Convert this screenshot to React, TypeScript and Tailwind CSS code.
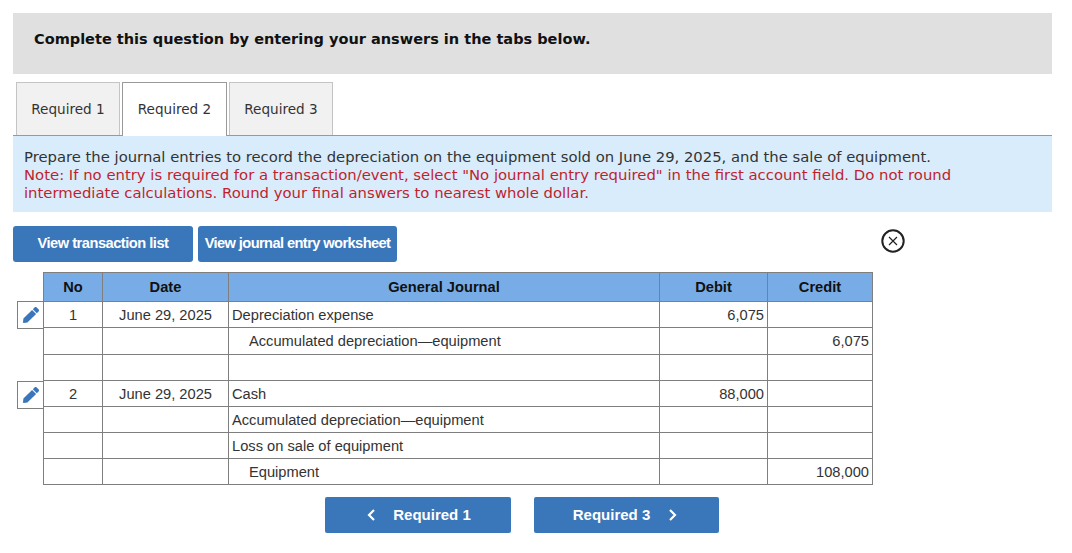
import React from "react";

const Pencil = () => (
  <svg width="16" height="16" viewBox="0 0 512 512" className="block">
    <path fill="#3a76ba" d="M290.74 93.24l128.02 128.02-277.99 277.99-114.14 12.6C11.35 513.54-1.56 500.62.14 485.34l12.7-114.22 277.9-277.88zm207.2-19.06l-60.11-60.11c-18.75-18.75-49.16-18.75-67.91 0l-56.55 56.55 128.02 128.02 56.55-56.55c18.75-18.76 18.75-49.16 0-67.91z" />
  </svg>
);

type Row = { edit?: boolean; no?: string; date?: string; acct?: string; indent?: boolean; debit?: string; credit?: string; h: string };

const rows: Row[] = [
  { edit: true, no: "1", date: "June 29, 2025", acct: "Depreciation expense", debit: "6,075", h: "h-[26px]" },
  { acct: "Accumulated depreciation—equipment", indent: true, credit: "6,075", h: "h-[27px]" },
  { h: "h-[26px]" },
  { edit: true, no: "2", date: "June 29, 2025", acct: "Cash", debit: "88,000", h: "h-[26px]" },
  { acct: "Accumulated depreciation—equipment", h: "h-[26px]" },
  { acct: "Loss on sale of equipment", h: "h-[26px]" },
  { acct: "Equipment", indent: true, credit: "108,000", h: "h-[26px]" },
];

const Tab = ({ label, active }: { label: string; active?: boolean }) => (
  <div
    className={
      active
        ? "w-[105px] h-[54px] -mb-px z-10 bg-white border border-b-0 border-[#999999] flex items-center justify-center text-[13.6px] text-[#333333]"
        : "w-[104px] h-[53px] bg-[#f1f1f1] border border-b-0 border-[#c4c4c4] flex items-center justify-center text-[13.6px] text-[#333333]"
    }
  >
    {label}
  </div>
);

export default function App() {
  return (
    <div className="w-[1072px] h-[553px] overflow-hidden bg-white font-['Liberation_Sans',sans-serif] text-[#333333] pt-[13px] px-[13px]">
      <div className="w-[1039px] h-[61px] bg-[#e0e0e0] pl-[21px] pt-[16px] font-['DejaVu_Sans',sans-serif] font-bold text-[14.53px] leading-[21px] text-[#111111]">
        Complete this question by entering your answers in the tabs below.
      </div>

      <div className="w-[1039px] mt-[8px] h-[54px] flex items-end gap-[2px] pl-[3px] border-b border-[#999999] font-['DejaVu_Sans',sans-serif]">
        <Tab label="Required 1" />
        <Tab label="Required 2" active />
        <Tab label="Required 3" />
      </div>

      <div className="w-[1039px] h-[76px] bg-[#d9ecfb] pl-[11px] pr-[90px] pt-[12px] font-['DejaVu_Sans',sans-serif] text-[14.8px] leading-[18px] text-[#333333]">
        <div>Prepare the journal entries to record the depreciation on the equipment sold on June 29, 2025, and the sale of equipment.</div>
        <div className="text-[#c01f2e] text-[14.85px]">
          Note: If no entry is required for a transaction/event, select "No journal entry required" in the first account field. Do not round intermediate calculations. Round your final answers to nearest whole dollar.
        </div>
      </div>

      <div className="mt-[14px] h-[36px] w-[1039px] flex gap-[5px] relative">
        <div className="w-[180px] h-[36px] pb-[2px] rounded-[3px] bg-[#3a76ba] flex items-center justify-center text-white font-bold text-[14.67px] tracking-[-0.5px]">
          View transaction list
        </div>
        <div className="w-[199px] h-[36px] pb-[2px] rounded-[3px] bg-[#3a76ba] flex items-center justify-center text-white font-bold text-[14.67px] tracking-[-0.6px]">
          View journal entry worksheet
        </div>
        <svg width="24" height="24" viewBox="0 0 24 24" className="absolute left-[868px] top-[3px]" fill="none" stroke="#222222">
          <circle cx="12" cy="12" r="10.7" strokeWidth="2" />
          <path d="M8 8l8 8M16 8l-8 8" strokeWidth="1.2" />
        </svg>
      </div>

      <div className="mt-[10px] ml-[4px] flex items-start">
        <div className="w-[26px] pt-[29px] flex flex-col">
          {rows.map((r, i) => (
            <div
              key={i}
              className={
                r.edit
                  ? "h-[26px] -mb-px w-[26px] box-content border border-r-0 border-[#7f7f7f] flex items-center justify-center bg-white"
                  : r.h
              }
            >
              {r.edit ? <Pencil /> : null}
            </div>
          ))}
        </div>
        <table className="border-collapse table-fixed w-[830px] text-[14.67px] text-[#333333]">
          <colgroup>
            <col className="w-[59px]" />
            <col className="w-[126px]" />
            <col className="w-[431px]" />
            <col className="w-[108px]" />
            <col className="w-[105px]" />
          </colgroup>
          <thead>
            <tr className="h-[29px] bg-[#78ace6] text-[#111111] font-bold">
              <th className="border border-[#7f7f7f] p-0 font-bold">No</th>
              <th className="border border-[#7f7f7f] p-0 font-bold">Date</th>
              <th className="border border-[#7f7f7f] p-0 font-bold">General Journal</th>
              <th className="border border-[#7f7f7f] p-0 font-bold">Debit</th>
              <th className="border border-[#7f7f7f] p-0 font-bold">Credit</th>
            </tr>
          </thead>
          <tbody>
            {rows.map((r, i) => (
              <tr key={i} className={r.h}>
                <td className="border border-[#7f7f7f] p-0 text-center">{r.no}</td>
                <td className="border border-[#7f7f7f] p-0 text-center">{r.date}</td>
                <td className={r.indent ? "border border-[#7f7f7f] p-0 pl-[20px]" : "border border-[#7f7f7f] p-0 pl-[3px]"}>{r.acct}</td>
                <td className="border border-[#7f7f7f] p-0 pr-[3px] text-right">{r.debit}</td>
                <td className="border border-[#7f7f7f] p-0 pr-[3px] text-right">{r.credit}</td>
              </tr>
            ))}
          </tbody>
        </table>
      </div>

      <div className="mt-[11px] flex pl-[312px] gap-[23px]">
        <div className="w-[186px] h-[36px] pl-[2px] rounded-[2px] bg-[#3a76ba] flex items-center justify-center gap-[17px] text-white font-bold text-[15px]">
          <svg width="9" height="12" viewBox="0 0 9 12" fill="none" stroke="white" strokeWidth="2.2"><path d="M7 1L2 6l5 5" /></svg>
          Required 1
        </div>
        <div className="w-[185px] h-[36px] pr-[3px] rounded-[2px] bg-[#3a76ba] flex items-center justify-center gap-[18px] text-white font-bold text-[15px]">
          Required 3
          <svg width="9" height="12" viewBox="0 0 9 12" fill="none" stroke="white" strokeWidth="2.2"><path d="M2 1l5 5-5 5" /></svg>
        </div>
      </div>
    </div>
  );
}
